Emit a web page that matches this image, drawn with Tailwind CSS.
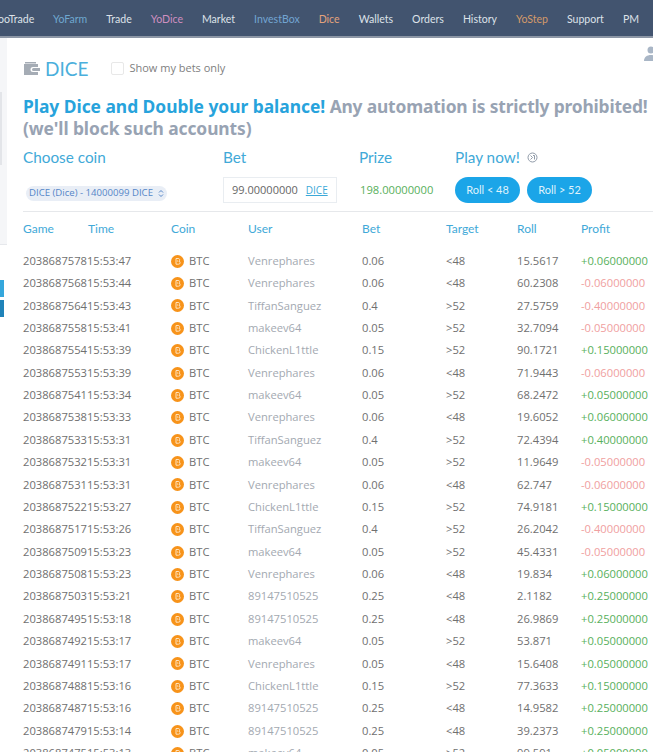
<!DOCTYPE html>
<html lang="en">
<head>
  <meta charset="UTF-8" />
  <meta name="viewport" content="width=device-width, initial-scale=1.0" />
  <title>Dice</title>
  <script src="https://cdn.jsdelivr.net/npm/@tailwindcss/browser@4"></script>
</head>
<body class="bg-white font-['Open_Sans',sans-serif] overflow-hidden h-[752px] w-[653px]">
  <!-- Top nav -->
  <nav class="h-[38px] bg-[#42546f] border-b-2 border-[#8c96a5] flex items-center gap-[19px] pt-[3px] text-[10.55px] font-['Lato',sans-serif] text-[#dde2e9] whitespace-nowrap overflow-hidden">
    <a class="ml-[-2px] w-[36px] text-right shrink-0">ooTrade</a>
    <a class="text-[#6fa8cf]">YoFarm</a>
    <a>Trade</a>
    <a class="text-[#cf8fc0]">YoDice</a>
    <a>Market</a>
    <a class="text-[#72a5d2]">InvestBox</a>
    <a class="text-[#e2a27c]">Dice</a>
    <a>Wallets</a>
    <a>Orders</a>
    <a>History</a>
    <a class="text-[#d49a6a]">YoStep</a>
    <a>Support</a>
    <a>PM</a>
  </nav>

  <div class="flex relative">
    <!-- Left rail, mostly cut off -->
    <aside class="w-[7px] h-[714px] shrink-0 bg-white">
      <div class="h-[207px] bg-[#f5f6f8] border-b border-[#e6e8ec]">
        <div class="h-[54px]"></div>
        <div class="h-[73px] w-[2px] bg-[#e3e5e9]"></div>
      </div>
      <div class="mt-[35px] w-[4px] h-[17px] bg-[#35a7dc]"></div>
      <div class="mt-[3px] w-[4px] h-[17px] bg-[#1f83b9]"></div>
    </aside>

    <main class="w-[646px] pl-[16px] shrink-0">
      <!-- Title -->
      <div class="flex items-center h-[22px] mt-[19px]">
        <svg class="w-[17px] h-[15px] mr-[5px]" viewBox="0 0 17 15" fill="#a5acb5">
          <path d="M2 1h11v1.500H2zM1 3h14v3H10a2.500 2.500 0 0 0 0 5h5v3H1z" />
          <path d="M10.500 7H17v3h-6.500a1.500 1.500 0 0 1 0-3z" />
        </svg>
        <h1 class="text-[19px] text-[#4aafdc] font-['Lato',sans-serif] leading-none">DICE</h1>
        <span class="w-[13px] h-[13px] ml-[23px] border border-[#e8e8e8] rounded-[2px]"></span>
        <span class="ml-[5px] text-[11px] text-[#808080]">Show my bets only</span>
      </div>

      <!-- Headline -->
      <p class="mt-[16px] text-[17.4px] leading-[22px] font-bold font-['Noto_Sans',sans-serif] text-[#98a3b3] whitespace-nowrap tracking-[-0.08px]">
        <span class="text-[#27a3dc] tracking-[-0.02px]">Play Dice and Double your balance!</span> <span class="tracking-[-0.17px]">Any automation is strictly prohibited!</span><br />(we'll block such accounts)
      </p>

      <!-- Bet form -->
      <div class="grid grid-cols-[200px_136px_96px_1fr] mt-[3px] h-[31px] items-center text-[15.3px] text-[#41a9d8] font-['Lato',sans-serif]">
        <span>Choose coin</span>
        <span>Bet</span>
        <span>Prize</span>
        <span class="flex items-center gap-[7px]">Play now!
          <svg class="w-[11px] h-[11px]" viewBox="0 0 11 11" fill="none" stroke="#8f9aa8">
            <circle cx="5.500" cy="5.500" r="4.500" />
            <path d="M3.500 7.500l2-2-2-2M6 3.500h1.500v4" />
          </svg>
        </span>
      </div>
      <div class="grid grid-cols-[200px_136px_96px_1fr] h-[26px] mt-[4px] items-center">
        <div class="ml-[3px] mt-[6px] w-[141px] h-[15px] rounded-full bg-[#e9eef6] text-[9.6px] text-[#5586c8] flex items-center pl-[3px] gap-[5px] whitespace-nowrap">
          DICE (Dice) - 14000099 DICE
          <svg class="w-[6px] h-[9px]" viewBox="0 0 6 9" fill="none" stroke="#5586c8"><path d="M1 3.500l2-2 2 2M1 5.500l2 2 2-2" /></svg>
        </div>
        <div class="w-[114px] h-[26px] border border-[#e9edf1] flex items-center pl-[8px] text-[11px] text-[#666] whitespace-nowrap">
          99.00000000
          <span class="ml-[8px] text-[10px] text-[#3ba9d8] underline">DICE</span>
        </div>
        <span class="ml-[1px] text-[11.2px] text-[#58b05c]">198.00000000</span>
        <div class="flex gap-[7px]">
          <button class="w-[65px] h-[26px] rounded-full bg-[#1ba5e8] text-[11px] text-[#dff2fc] font-['Lato',sans-serif]">Roll &lt; 48</button>
          <button class="w-[65px] h-[26px] rounded-full bg-[#1ba5e8] text-[11px] text-[#dff2fc] font-['Lato',sans-serif]">Roll &gt; 52</button>
        </div>
      </div>

      <div class="mt-[8px] border-t border-[#e6e8eb]"></div>

      <!-- Bets table -->
      <div class="grid grid-cols-[65px_83px_77px_114px_84px_71px_64px_1fr] h-[33px] items-center text-[12px] text-[#41a9d8] font-['Lato',sans-serif]">
        <span>Game</span><span>Time</span><span>Coin</span><span>User</span><span>Bet</span><span>Target</span><span>Roll</span><span>Profit</span>
      </div>
      <div id="rows" class="mt-[5px]"></div>
    </main>

    <!-- Cut off account icon -->
    <svg class="absolute top-[8px] right-[-3px] w-[12px] h-[16px]" viewBox="0 0 12 16" fill="#a9b6c6">
      <circle cx="7" cy="4" r="3.500" />
      <path d="M0 15c0-4 3-6 7-6s5 2 5 6z" />
    </svg>
  </div>

  <script>
    const rows = [
      ["2038687578", "15:53:47", "Venrephares", "0.06", "<48", "15.5617", "+0.06000000"],
      ["2038687568", "15:53:44", "Venrephares", "0.06", "<48", "60.2308", "-0.06000000"],
      ["2038687564", "15:53:43", "TiffanSanguez", "0.4", ">52", "27.5759", "-0.40000000"],
      ["2038687558", "15:53:41", "makeev64", "0.05", ">52", "32.7094", "-0.05000000"],
      ["2038687554", "15:53:39", "ChickenL1ttle", "0.15", ">52", "90.1721", "+0.15000000"],
      ["2038687553", "15:53:39", "Venrephares", "0.06", "<48", "71.9443", "-0.06000000"],
      ["2038687541", "15:53:34", "makeev64", "0.05", ">52", "68.2472", "+0.05000000"],
      ["2038687538", "15:53:33", "Venrephares", "0.06", "<48", "19.6052", "+0.06000000"],
      ["2038687533", "15:53:31", "TiffanSanguez", "0.4", ">52", "72.4394", "+0.40000000"],
      ["2038687532", "15:53:31", "makeev64", "0.05", ">52", "11.9649", "-0.05000000"],
      ["2038687531", "15:53:31", "Venrephares", "0.06", "<48", "62.747", "-0.06000000"],
      ["2038687522", "15:53:27", "ChickenL1ttle", "0.15", ">52", "74.9181", "+0.15000000"],
      ["2038687517", "15:53:26", "TiffanSanguez", "0.4", ">52", "26.2042", "-0.40000000"],
      ["2038687509", "15:53:23", "makeev64", "0.05", ">52", "45.4331", "-0.05000000"],
      ["2038687508", "15:53:23", "Venrephares", "0.06", "<48", "19.834", "+0.06000000"],
      ["2038687503", "15:53:21", "89147510525", "0.25", "<48", "2.1182", "+0.25000000"],
      ["2038687495", "15:53:18", "89147510525", "0.25", "<48", "26.9869", "+0.25000000"],
      ["2038687492", "15:53:17", "makeev64", "0.05", ">52", "53.871", "+0.05000000"],
      ["2038687491", "15:53:17", "Venrephares", "0.05", "<48", "15.6408", "+0.05000000"],
      ["2038687488", "15:53:16", "ChickenL1ttle", "0.15", ">52", "77.3633", "+0.15000000"],
      ["2038687487", "15:53:16", "89147510525", "0.25", "<48", "14.9582", "+0.25000000"],
      ["2038687479", "15:53:14", "89147510525", "0.25", "<48", "39.2373", "+0.25000000"],
      ["2038687475", "15:53:13", "makeev64", "0.05", ">52", "99.591", "+0.05000000"],
    ];
    const esc = (s) => s.replace(/</g, "&lt;");
    document.getElementById("rows").innerHTML = rows.map((r) => `
      <div class="grid grid-cols-[148px_77px_114px_84px_71px_64px_1fr] h-[22.38px] items-center text-[11.2px] text-[#707070] whitespace-nowrap">
        <span>${r[0]}${r[1]}</span>
        <span class="flex items-center gap-[5px]">
          <svg class="w-[13px] h-[13px]" viewBox="0 0 13 13"><circle cx="6.500" cy="6.500" r="6.500" fill="#f7931a" /><path d="M5 3.500h2.200a1.400 1.400 0 0 1 .6 2.700 1.500 1.500 0 0 1-.4 3H5zM6 6h1" fill="none" stroke="#ffe3bd" stroke-width="1" /></svg>
          BTC
        </span>
        <span class="text-[#a3a9b1]">${r[2]}</span>
        <span>${r[3]}</span>
        <span>${esc(r[4])}</span>
        <span>${r[5]}</span>
        <span class="${r[6][0] === "+" ? "text-[#58b05c]" : "text-[#f0a0a0]"}">${r[6]}</span>
      </div>`).join("");
  </script>
</body>
</html>
